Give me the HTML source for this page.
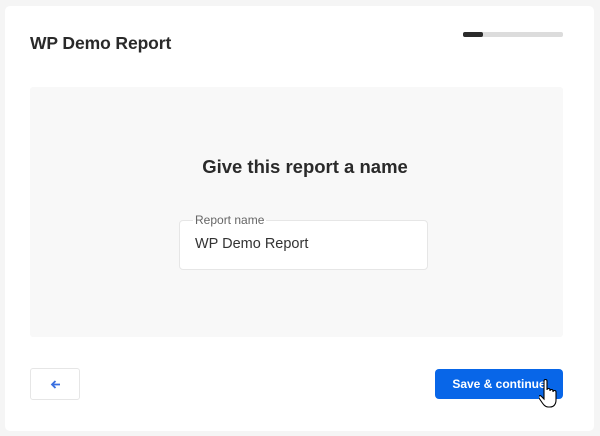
<!DOCTYPE html>
<html><head><style>
*{margin:0;padding:0;box-sizing:border-box}
body{width:600px;height:436px;background:#f5f5f5;font-family:"Liberation Sans",sans-serif;position:relative;overflow:hidden}
.card{position:absolute;left:5px;top:6px;width:589px;height:425px;background:#fff;border-radius:5px}
.title{position:absolute;left:30px;top:33px;font-size:17.5px;font-weight:bold;color:#2a2a2a;letter-spacing:-0.1px}
.bar{position:absolute;left:463px;top:32px;width:100px;height:5px;background:#dcdcdc;border-radius:2px}
.bar div{width:20px;height:5px;background:#2b2b2b;border-radius:2px}
.box{position:absolute;left:30px;top:87px;width:533px;height:250px;background:#f8f8f8;border-radius:3px}
.h{position:absolute;left:0;right:0;top:156px;text-align:center;font-size:18.5px;font-weight:bold;color:#2a2a2a;padding-left:10px}
.inp{position:absolute;left:179px;top:220px;width:249px;height:50px;background:#fff;border:1px solid #e6e6e6;border-radius:4px}
.lbl{position:absolute;left:193px;top:213px;font-size:12px;color:#666;background:linear-gradient(#f8f8f8 50%,#fff 50%);padding:0 2px}
.val{position:absolute;left:195px;top:236px;font-size:14.5px;color:#333}
.back{position:absolute;left:30px;top:368px;width:50px;height:32px;border:1px solid #e6e6e6;border-radius:3px;background:#fff}
.save{position:absolute;left:435px;top:369px;width:128px;height:30px;background:#0866e8;border-radius:4px;color:#fff;font-size:12px;font-weight:bold;text-align:center;line-height:30px}
</style></head><body>
<div class="card"></div>
<div class="title">WP Demo Report</div>
<div class="bar"><div></div></div>
<div class="box"></div>
<div class="h">Give this report a name</div>
<div class="inp"></div>
<div class="lbl">Report name</div>
<div class="val">WP Demo Report</div>
<div class="back"><svg width="50" height="32" viewBox="0 0 50 32"><path d="M29 15.5H21M24.5 12L21 15.5L24.5 19" stroke="#3a6fe0" stroke-width="1.8" fill="none"/></svg></div>
<div class="save">Save &amp; continue</div>
<svg style="position:absolute;left:539px;top:378px" width="22" height="36" viewBox="0 0 22 36"><path d="M5 3c0-2 3-2 3 0v9c0-2 3-2 3 0v1c0-2 3-2 3 0v1c0-2 3-2 3 0v8c0 4-2 7-6 7h-2c-3 0-5-3-7-6l-2-3c-1-2 1-3 2-2l3 3z" fill="#fff" stroke="#000" stroke-width="1.1"/></svg>
</body></html>
